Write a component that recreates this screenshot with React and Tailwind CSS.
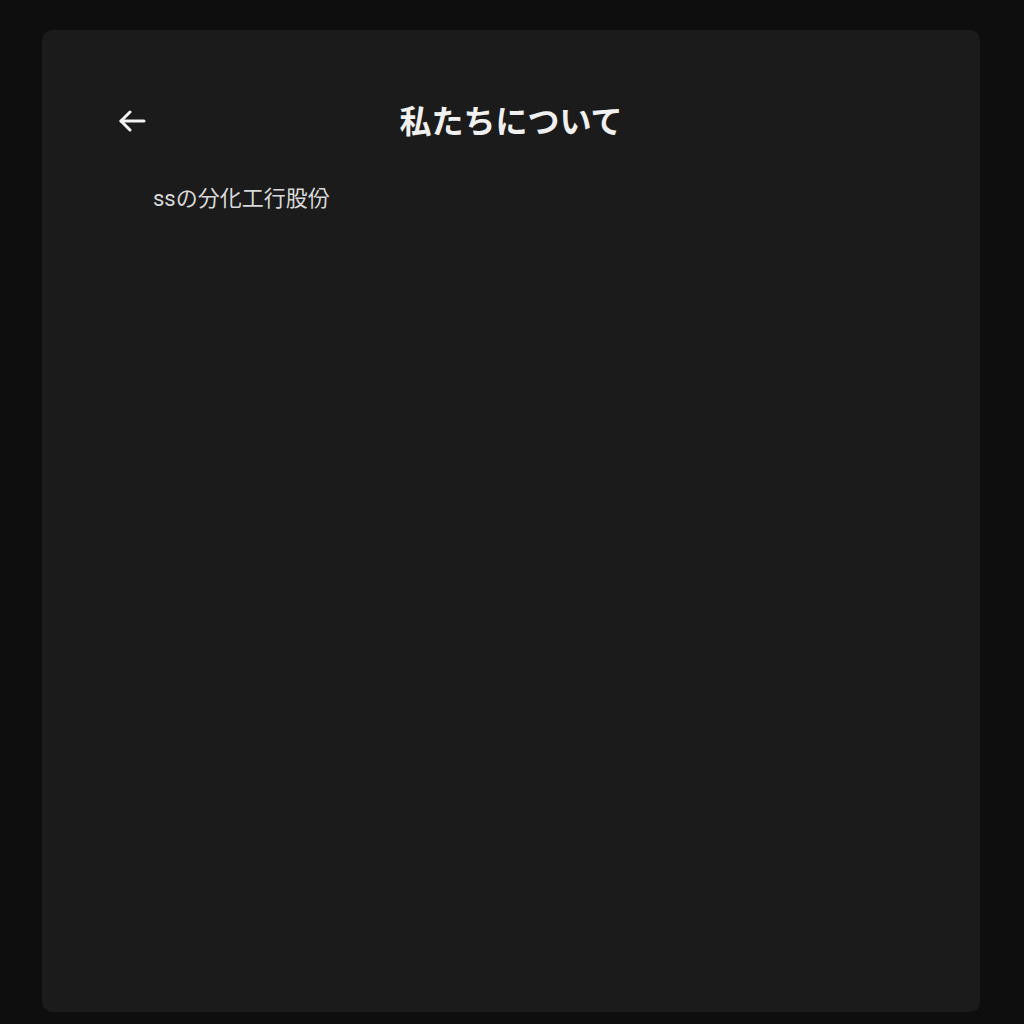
const BackArrow = () => (
  <svg width="27" height="22" viewBox="0 0 27 22" fill="none" stroke="currentColor" strokeWidth="3" strokeLinecap="round" strokeLinejoin="round">
    <polyline points="11,2 2,11 11,20" />
    <line x1="2" y1="11" x2="25" y2="11" />
  </svg>
);

export default function App() {
  return (
    <div className="min-h-screen h-screen bg-[#0e0e0e] pt-[30px] pb-[12px] pl-[42px] pr-[44px]">
      <div className="h-full rounded-[10px] bg-[#1b1b1b] px-[77px] pt-[65px]">
        {/* Header */}
        <div className="relative flex h-12 items-center justify-center">
          <button className="absolute left-0 top-[26px] -translate-y-1/2 text-[#f2f2f2]" aria-label="back">
            <BackArrow />
          </button>
          <h1 className="text-[32px] font-bold leading-none text-[#f0f0f0] font-['Noto_Sans_CJK_JP',sans-serif]">
            私たちについて
          </h1>
        </div>

        {/* Content */}
        <p className="mt-[40px] pl-[34px] text-[22px] leading-8 text-[#d8d8d8] font-['Roboto','Noto_Sans_CJK_JP',sans-serif]">
          ssの分化工行股份
        </p>
      </div>
    </div>
  );
}
